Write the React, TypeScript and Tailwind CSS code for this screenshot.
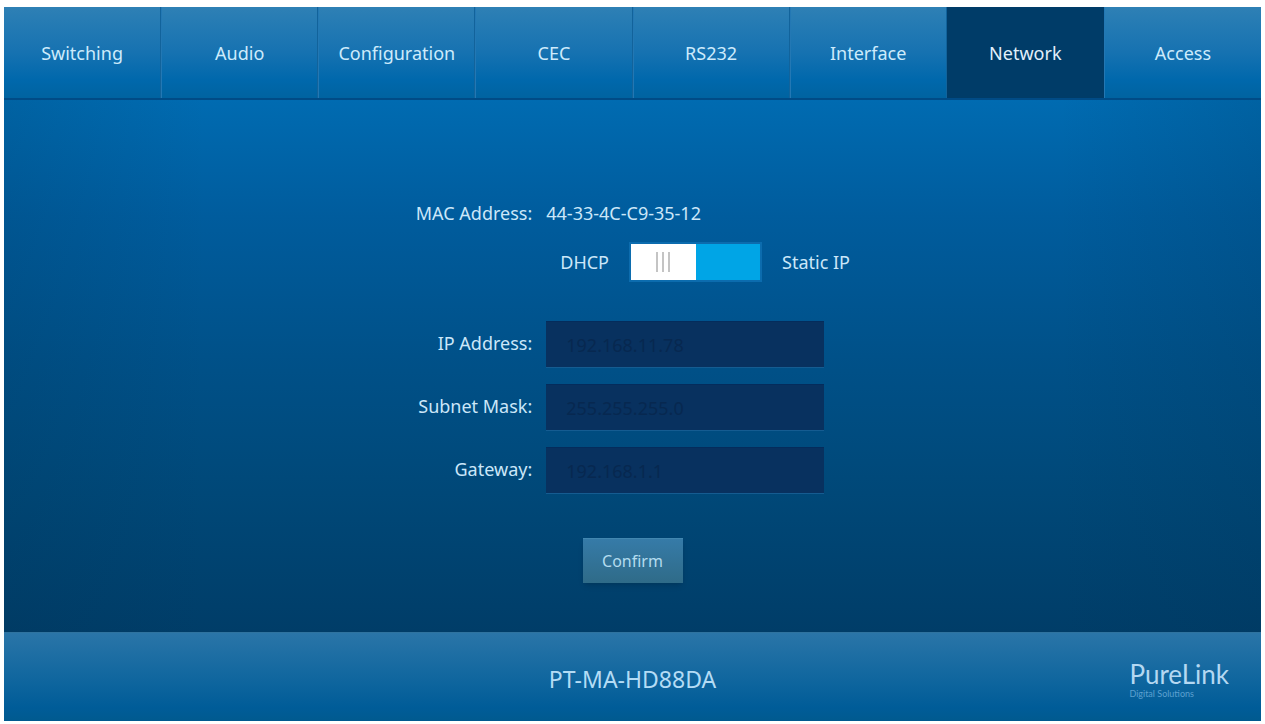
import React, { useState } from "react";

const tabs = ["Switching", "Audio", "Configuration", "CEC", "RS232", "Interface", "Network", "Access"];

const fields = [
    { id: "ip", label: "IP Address:", value: "192.168.11.78" },
    { id: "mask", label: "Subnet Mask:", value: "255.255.255.0" },
    { id: "gateway", label: "Gateway:", value: "192.168.1.1" },
];

function TopNav() {
    return (
        <nav className="grid h-[93px] grid-cols-8 border-b-2 border-[#004b86] bg-[linear-gradient(#2e80b5,#1672b1_50%,#0068ac_80%,#0063a0)]">
            {tabs.map((tab) => (
                <a
                    key={tab}
                    href="#"
                    aria-current={tab === "Network" ? "page" : undefined}
                    className={
                        tab === "Network"
                            ? "flex items-center justify-center bg-[#003c68] text-lg text-[#e2f0fb]"
                            : "flex items-center justify-center border-r border-l border-r-[#12639b] border-l-[#2378b4] text-lg text-[#cdebfc] first:border-l-0 last:border-r-0"
                    }
                >
                    {tab}
                </a>
            ))}
        </nav>
    );
}

function ModeSwitch() {
    const [isStatic, setIsStatic] = useState(false);
    return (
        <div className="flex items-center gap-5 pl-[14px]">
            <span>DHCP</span>
            <label className="flex h-10 w-[133px] cursor-pointer border-2 border-[#0c6cae] bg-[#00a5e6]">
                <input
                    type="checkbox"
                    aria-label="Use static IP"
                    className="sr-only"
                    checked={isStatic}
                    onChange={(e) => setIsStatic(e.target.checked)}
                />
                <span
                    className={
                        isStatic
                            ? "ml-auto flex w-1/2 items-center justify-center gap-1 bg-white"
                            : "flex w-1/2 items-center justify-center gap-1 bg-white"
                    }
                >
                    <span className="h-5 w-0.5 bg-[#c4c4c4]" />
                    <span className="h-5 w-0.5 bg-[#c4c4c4]" />
                    <span className="h-5 w-0.5 bg-[#c4c4c4]" />
                </span>
            </label>
            <span>Static IP</span>
        </div>
    );
}

function NetworkForm() {
    return (
        <form onSubmit={(e) => e.preventDefault()} className="text-lg text-[#cbe7f9]">
            <div className="grid grid-cols-[17fr_23fr] items-center gap-x-[14px]">
                <span className="text-right">MAC Address:</span>
                <span>44-33-4C-C9-35-12</span>
                <div className="col-start-2 mt-[15px] mb-[39px]">
                    <ModeSwitch />
                </div>
            </div>
            <div className="grid grid-cols-[17fr_23fr] items-center gap-x-[14px] gap-y-4">
                {fields.map((field) => (
                    <React.Fragment key={field.id}>
                        <label htmlFor={field.id} className="pb-1 text-right">
                            {field.label}
                        </label>
                        <input
                            id={field.id}
                            type="text"
                            defaultValue={field.value}
                            className="h-[47px] w-[278px] border-t border-b border-t-[#042c5c] border-b-[#155c91] bg-[#08315f] px-5 text-[#072850] outline-none"
                        />
                    </React.Fragment>
                ))}
            </div>
            <div className="mt-11 flex justify-center">
                <button
                    type="submit"
                    className="h-[45px] w-[100px] border-t border-[#4287b0] bg-[linear-gradient(#367ba8,#2f6b88)] text-base text-[#b4dcef] shadow-md"
                >
                    Confirm
                </button>
            </div>
        </form>
    );
}

function Footer() {
    return (
        <footer className="grid h-[89px] grid-cols-3 items-center border-t border-[#2f739f] bg-[linear-gradient(#2a75a8,#11679f_50%,#005c98_85%,#005a8f)] px-8 pt-1">
            <p className="col-start-2 text-center text-[23px] text-[#b4dcf5]">PT-MA-HD88DA</p>
            <div className="flex justify-end">
                <div className="font-[Lato,sans-serif]">
                    <p className="text-[26px] leading-7 text-[#b4d8f2]">PureLink</p>
                    <p className="text-[9px] leading-[11px] text-[#5ca0d0]">Digital Solutions</p>
                </div>
            </div>
        </footer>
    );
}

export default function App() {
    return (
        <div className="flex min-h-screen flex-col bg-white px-1 pt-[7px] pb-[3px] font-['Noto_Sans',sans-serif]">
            <TopNav />
            <main className="flex-1 bg-[linear-gradient(90deg,#00305026,transparent_16%,transparent_84%,#00305026),linear-gradient(#006bb1,#005c9d_22%,#005189_48%,#004878_74%,#003d68)] pt-[99px]">
                <NetworkForm />
            </main>
            <Footer />
        </div>
    );
}
